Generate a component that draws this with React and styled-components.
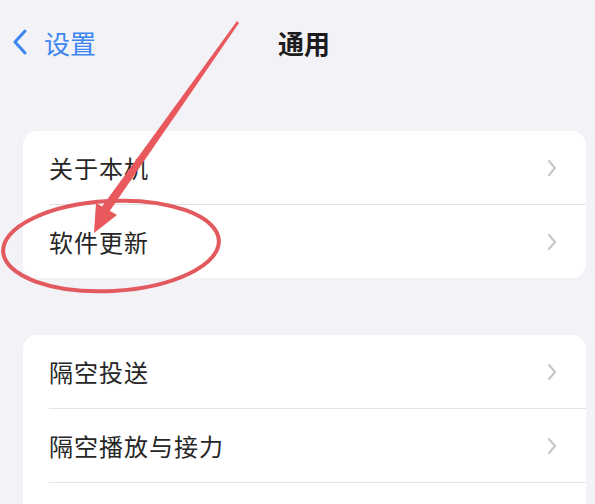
import styled, { createGlobalStyle } from 'styled-components';

const GlobalStyle = createGlobalStyle`
  body {
    margin: 0;
    background: #f2f2f7;
    font-family: "Noto Sans CJK SC", "Noto Sans", sans-serif;
  }
`;

const groups = [
  ['关于本机', '软件更新'],
  ['隔空投送', '隔空播放与接力', ''],
];

export default function App() {
  return (
    <>
      <GlobalStyle />
      <Page>
        <NavBar>
          <Back>
            <svg width="16" height="26" viewBox="0 0 16 26">
              <path d="M13 2 L3 13 L13 24" fill="none" stroke="#3d86f2" strokeWidth="3" strokeLinecap="round" strokeLinejoin="round" />
            </svg>
            <BackLabel>设置</BackLabel>
          </Back>
          <Title>通用</Title>
        </NavBar>
        {groups.map((items, gi) => (
          <Card key={gi}>
            {items.map((label, i) => (
              <Row key={i} $last={i === items.length - 1}>
                <Label>{label}</Label>
                {label && (
                  <svg width="10" height="18" viewBox="0 0 10 18">
                    <path d="M2 2 L8 9 L2 16" fill="none" stroke="#c5c5c9" strokeWidth="2" strokeLinecap="round" strokeLinejoin="round" />
                  </svg>
                )}
              </Row>
            ))}
          </Card>
        ))}
        <Annotation width="595" height="504" viewBox="0 0 595 504">
          <polygon points="237,21 239,23 109,212 101,208" fill="#e9585c" />
          <polygon points="96,203 94,233 117,215" fill="#e9585c" />
          <ellipse cx="111" cy="246" rx="108" ry="45" fill="none" stroke="#e25a5e" strokeWidth="4" transform="rotate(-3 111 246)" />
        </Annotation>
      </Page>
    </>
  );
}

const Page = styled.div`
  position: relative;
  width: 595px;
  height: 504px;
  overflow: hidden;
  background: #f2f2f7;
`;

const NavBar = styled.div`
  height: 84px;
  display: flex;
  align-items: center;
  padding-left: 12px;
`;

const Back = styled.div`
  display: flex;
  align-items: center;
  gap: 16px;
`;

const BackLabel = styled.span`
  font-size: 26px;
  color: #3d86f2;
`;

const Title = styled.div`
  margin-left: 182px;
  font-size: 26px;
  font-weight: 600;
  color: #1c1c1e;
`;

const Card = styled.div`
  margin: 47px 9px 10px 23px;
  background: #fff;
  border-radius: 14px;
  & + & {
    margin-top: 57px;
  }
`;

const Row = styled.div`
  height: 73px;
  margin-left: 26px;
  padding-right: 29px;
  display: flex;
  align-items: center;
  justify-content: space-between;
  border-bottom: ${p => (p.$last ? 'none' : '1px solid #e3e3e7')};
`;

const Label = styled.span`
  font-size: 24px;
  color: #262626;
  letter-spacing: 1px;
`;

const Annotation = styled.svg`
  position: absolute;
  left: 0;
  top: 0;
  pointer-events: none;
`;
